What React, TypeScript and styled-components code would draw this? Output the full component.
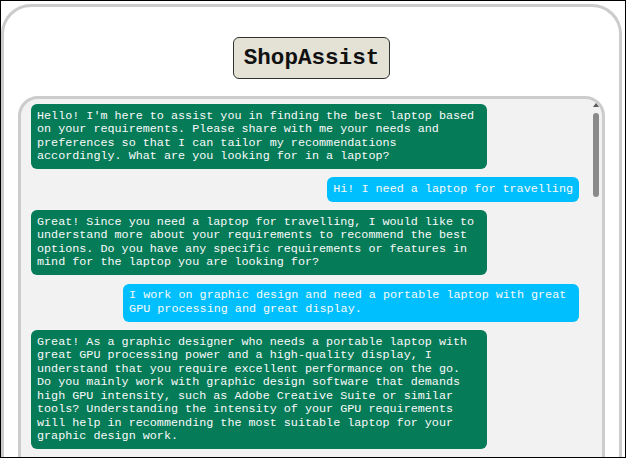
import React from "react";
import styled, { createGlobalStyle } from "styled-components";

const GlobalStyle = createGlobalStyle`
  html, body {
    margin: 0;
    padding: 0;
    background: #ffffff;
  }
  body {
    font-family: "Liberation Mono", "Courier New", monospace;
  }
  * {
    box-sizing: border-box;
  }
`;

const Frame = styled.div`
  width: 626px;
  height: 458px;
  border: 1px solid #000;
  background: #fff;
  overflow: hidden;
`;

const Card = styled.main`
  margin: 3px 3px 0 0;
  border: 3px solid #cccccc;
  border-radius: 30px;
  padding: 30px 14px 0 14px;
  display: flex;
  flex-direction: column;
  align-items: center;
  background: #fff;
`;

const Title = styled.h1`
  margin: 0 0 17px 0;
  padding: 7px 10px;
  border: 1px solid #333;
  border-radius: 6px;
  background: #e4e1d5;
  color: #111;
  font-family: "Liberation Mono", "Courier New", monospace;
  font-weight: bold;
  font-size: 22.6px;
  line-height: 26px;
`;

const ChatBox = styled.section`
  align-self: stretch;
  height: 420px;
  display: flex;
  border: 3px solid #cccccc;
  border-radius: 20px;
  background: #f2f2f2;
`;

const Thread = styled.div`
  flex: 1;
  min-width: 0;
  overflow-y: auto;
  scrollbar-width: none;
  padding: 5px 11px 10px 10px;
  display: flex;
  flex-direction: column;
  gap: 8.4px;
`;

const ScrollRail = styled.div`
  flex: none;
  width: 12px;
  padding-top: 4px;
  display: flex;
  flex-direction: column;
  align-items: center;
`;

const ScrollArrow = styled.div`
  width: 0;
  height: 0;
  border-left: 3px solid transparent;
  border-right: 3px solid transparent;
  border-bottom: 4px solid #5a5a5a;
`;

const ScrollThumb = styled.div`
  width: 6px;
  height: 84px;
  margin-top: 6px;
  border-radius: 3px;
  background: #8a8a8a;
`;

const Bubble = styled.div<{ $from: "bot" | "user" }>`
  align-self: ${(p) => (p.$from === "bot" ? "flex-start" : "flex-end")};
  max-width: 83.2%;
  padding: 5.5px 6px;
  border-radius: 6px;
  background: ${(p) => (p.$from === "bot" ? "#067b58" : "#00bfff")};
  color: #fafafa;
  font-family: "Liberation Mono", "Courier New", monospace;
  font-size: 11.75px;
  line-height: 13.5px;
`;

const messages: { from: "bot" | "user"; text: string }[] = [
  {
    from: "bot",
    text:
      "Hello! I'm here to assist you in finding the best laptop based on your requirements. Please share with me your needs and preferences so that I can tailor my recommendations accordingly. What are you looking for in a laptop?",
  },
  { from: "user", text: "Hi! I need a laptop for travelling" },
  {
    from: "bot",
    text:
      "Great! Since you need a laptop for travelling, I would like to understand more about your requirements to recommend the best options. Do you have any specific requirements or features in mind for the laptop you are looking for?",
  },
  {
    from: "user",
    text:
      "I work on graphic design and need a portable laptop with great GPU processing and great display.",
  },
  {
    from: "bot",
    text:
      "Great! As a graphic designer who needs a portable laptop with great GPU processing power and a high-quality display, I understand that you require excellent performance on the go. Do you mainly work with graphic design software that demands high GPU intensity, such as Adobe Creative Suite or similar tools? Understanding the intensity of your GPU requirements will help in recommending the most suitable laptop for your graphic design work.",
  },
];

export default function App() {
  return (
    <>
      <GlobalStyle />
      <Frame>
        <Card>
          <Title>ShopAssist</Title>
          <ChatBox>
            <Thread>
              {messages.map((m, i) => (
                <Bubble key={i} $from={m.from}>
                  {m.text}
                </Bubble>
              ))}
            </Thread>
            <ScrollRail aria-hidden="true">
              <ScrollArrow />
              <ScrollThumb />
            </ScrollRail>
          </ChatBox>
        </Card>
      </Frame>
    </>
  );
}
